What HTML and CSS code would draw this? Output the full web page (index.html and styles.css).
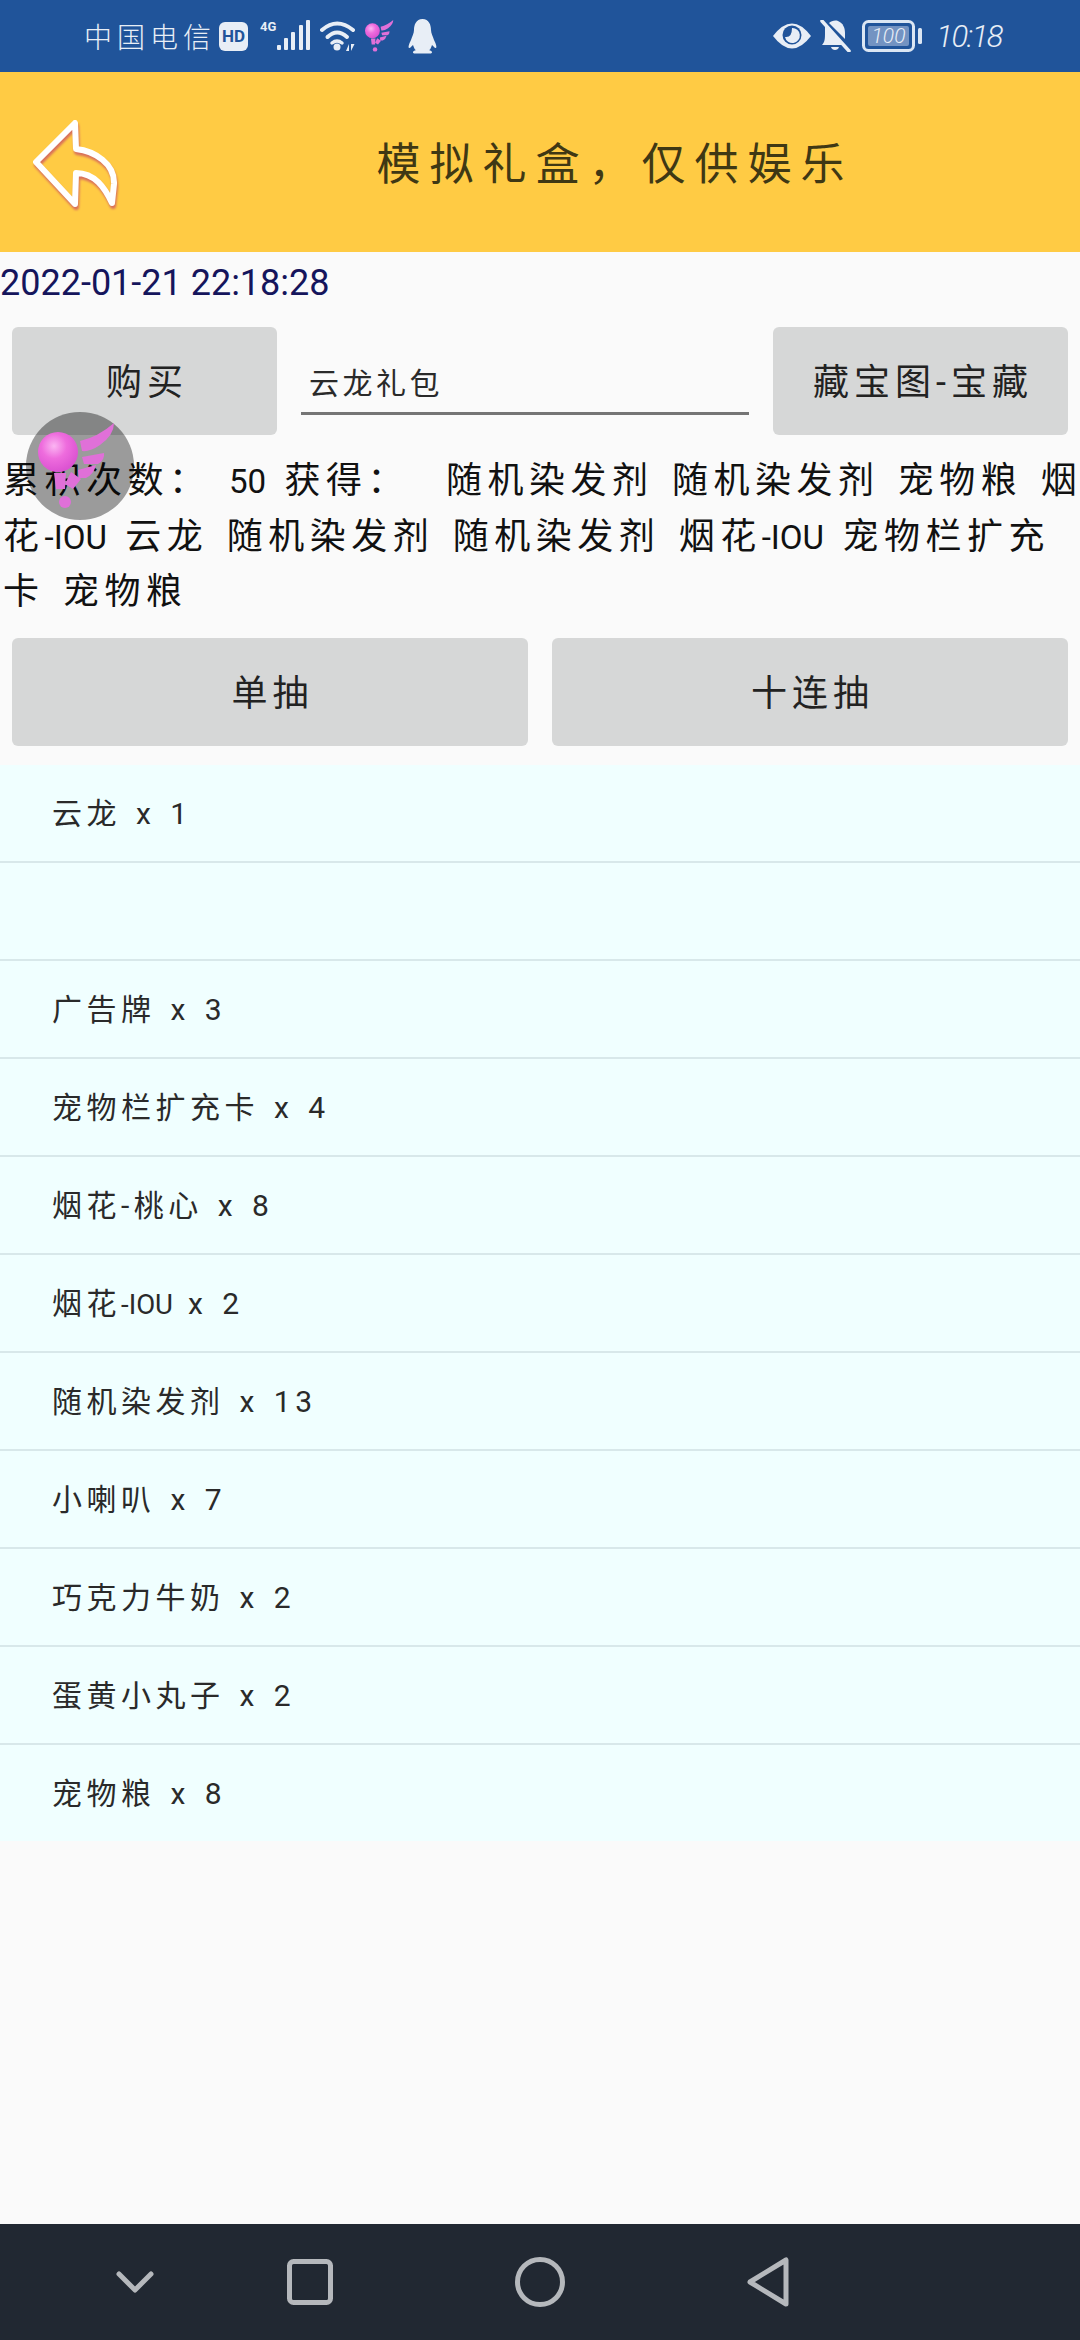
FILE: index.html
```html
<!DOCTYPE html>
<html lang="zh-CN">
<head>
    <meta charset="UTF-8">
    <meta name="viewport" content="width=device-width, initial-scale=1.0">
    <title>模拟礼盒，仅供娱乐</title>
    <link rel="stylesheet" href="styles.css">
</head>
<body>
    <svg class="defs" width="0" height="0">
        <defs>
            <radialGradient id="ballFill" cx="0.4" cy="0.35" r="0.7">
                <stop offset="0" stop-color="#fbb5f2"/>
                <stop offset="0.45" stop-color="#ee6cdd"/>
                <stop offset="1" stop-color="#d94fd0"/>
            </radialGradient>
            <symbol id="wingBall" viewBox="0 0 78 90">
                <circle cx="20" cy="31" r="20" fill="url(#ballFill)"/>
                <path d="M42 20 Q60 16 76 2 Q76 14 62 24 Q52 31 44 30 Z" fill="#e070d8"/>
                <path d="M44 36 L66 32 Q67 39 60 43 L46 43 Z" fill="#e070d8"/>
                <path d="M40 49 L58 44 Q56 53 48 57 L41 57 Z" fill="#e070d8"/>
                <path d="M33 51 L43 58 L35 68 L27 63 Z" fill="#e070d8"/>
                <path d="M16 52 L28 52 L27 68 L18 68 Z" fill="#e070d8"/>
                <circle cx="27" cy="81" r="6" fill="#e070d8"/>
            </symbol>
        </defs>
    </svg>

    <div class="status-bar">
        <div class="status-left">
            <span class="carrier">中国电信</span>
            <span class="hd-badge">HD</span>
            <svg class="icon-signal" width="50" height="32" viewBox="0 0 50 32">
                <text class="signal-label" x="0" y="11">4G</text>
                <rect x="17" y="25" width="4" height="5" rx="1"/>
                <rect x="24" y="18" width="4" height="12" rx="1"/>
                <rect x="31" y="12" width="4" height="18" rx="1"/>
                <rect x="39" y="5" width="4" height="25" rx="1"/>
                <rect x="46" y="0" width="4" height="30" rx="1"/>
            </svg>
            <svg class="icon-wifi" width="36" height="32" viewBox="0 0 36 32">
                <path d="M2 10 Q17 -3 33 10" fill="none" stroke="#e8eef6" stroke-width="4" stroke-linecap="round"/>
                <path d="M7.5 17 Q17 8 27 17" fill="none" stroke="#e8eef6" stroke-width="4" stroke-linecap="round"/>
                <path d="M12 23 Q17 19 22 23" fill="none" stroke="#e8eef6" stroke-width="3.5" stroke-linecap="round"/>
                <circle cx="17" cy="27" r="3.5" fill="#e8eef6"/>
                <path d="M26 31 L29 24 L29 31 Z M31 24 L34.5 24 L31 31 Z" fill="#e8eef6"/>
            </svg>
            <svg class="icon-pink" width="29" height="34"><use href="#wingBall"/></svg>
            <svg class="icon-qq" width="29" height="35" viewBox="0 0 29 35">
                <path d="M14.5 0 C8 0 6 6 6 11 C6 14 4 18 3 21 C1 25 0 28 1 29 C2 29.5 4 27 5 26 C6 29 7 31 8 31 C5 32 4 33.5 6 34.5 H23 C25 33.5 24 32 21 31 C22 31 23 29 24 26 C25 27 27 29.5 28 29 C29 28 28 25 26 21 C25 18 23 14 23 11 C23 6 21 0 14.5 0 Z" fill="#e8eef6"/>
            </svg>
        </div>
        <div class="status-right">
            <svg class="icon-eye" width="40" height="26" viewBox="0 0 40 26">
                <path d="M1 13 Q20 -12 39 13 Q20 38 1 13 Z" fill="#e8eef6"/>
                <circle cx="20" cy="12" r="9.5" fill="#20549a"/>
                <path d="M20 5 A7.5 7.5 0 1 1 13 14 Q20 15 20 5 Z" fill="#e8eef6"/>
            </svg>
            <svg class="icon-bell" width="31" height="32" viewBox="0 0 31 32">
                <path d="M5 5 L23 25 H2 C5 22 5 18 5 13 Z" fill="#e8eef6"/>
                <path d="M9 3 C11 1 15 0 18 1 C23 3 25 8 25 13 L25 19 Z" fill="#e8eef6"/>
                <path d="M11 27 H19 C18 31 12 31 11 27 Z" fill="#e8eef6"/>
                <path d="M2 1 L29 31" stroke="#e8eef6" stroke-width="3.5" stroke-linecap="round"/>
            </svg>
            <svg class="icon-battery" width="60" height="33" viewBox="0 0 60 33">
                <rect x="1.5" y="1.5" width="50" height="29" rx="5" fill="none" stroke="#dbe6f3" stroke-width="3"/>
                <rect x="6" y="6" width="41" height="20" rx="2" fill="#7393c2"/>
                <rect x="56" y="8" width="4" height="16" rx="1.5" fill="#dbe6f3"/>
                <text class="battery-label" x="26.5" y="23" text-anchor="middle">100</text>
            </svg>
            <span class="clock">10:18</span>
        </div>
    </div>

    <header class="title-bar">
        <div class="back-zone">
            <svg class="icon-back" width="90" height="92" viewBox="0 0 90 92">
                <path d="M3 44 L42 5 L43 31 C62 33 82 46 81 66 L79 85 C72 70 62 55 43 55 L42 86 Z" fill="none" stroke="#fff" stroke-width="6" stroke-linejoin="round"/>
            </svg>
        </div>
        <h1 class="page-title">模拟礼盒，仅供娱乐</h1>
    </header>

    <main class="content">
        <div class="date-line">2022-01-21 22:18:28</div>

        <div class="buy-row">
            <button class="btn btn-buy">购买</button>
            <div class="gift-field">云龙礼包</div>
            <button class="btn btn-map">藏宝图-宝藏</button>
        </div>

        <p class="draw-log">累积次数： <span class="tag">50</span> 获得：  随机染发剂 随机染发剂 宠物粮 烟<br>花<span class="tag">-IOU</span> 云龙 随机染发剂 随机染发剂 烟花<span class="tag">-IOU</span> 宠物栏扩充<br>卡 宠物粮</p>

        <div class="draw-row">
            <button class="btn">单抽</button>
            <button class="btn">十连抽</button>
        </div>

        <ul class="prize-list">
            <li>云龙 x 1</li>
            <li></li>
            <li>广告牌 x 3</li>
            <li>宠物栏扩充卡 x 4</li>
            <li>烟花-桃心 x 8</li>
            <li>烟花<span class="tag">-IOU</span> x 2</li>
            <li>随机染发剂 x 13</li>
            <li>小喇叭 x 7</li>
            <li>巧克力牛奶 x 2</li>
            <li>蛋黄小丸子 x 2</li>
            <li>宠物粮 x 8</li>
        </ul>
    </main>

    <nav class="nav-bar">
        <svg class="nav-back" width="38" height="22" viewBox="0 0 38 22"><path d="M3 3 L19 19 L35 3" fill="none" stroke="#b5b8bc" stroke-width="5" stroke-linecap="round" stroke-linejoin="round"/></svg>
        <svg class="nav-recent" width="46" height="46" viewBox="0 0 46 46"><rect x="2.5" y="2.5" width="41" height="41" rx="4" fill="none" stroke="#b5b8bc" stroke-width="5"/></svg>
        <svg class="nav-home" width="50" height="50" viewBox="0 0 50 50"><circle cx="25" cy="25" r="22.5" fill="none" stroke="#b5b8bc" stroke-width="5"/></svg>
        <svg class="nav-return" width="44" height="50" viewBox="0 0 44 50"><path d="M4 25 L40 3 V47 Z" fill="none" stroke="#b5b8bc" stroke-width="5" stroke-linejoin="round"/></svg>
    </nav>

    <div class="float-ball">
        <svg width="78" height="90"><use href="#wingBall"/></svg>
    </div>
</body>
</html>
```

FILE: styles.css
```css
html, body {
    margin: 0;
    padding: 0;
}
body {
    position: relative;
    display: flex;
    flex-direction: column;
    width: 1080px;
    height: 2340px;
    overflow: hidden;
    background-color: #fafafa;
    color: #1c1c1c;
    font-family: Roboto, "Noto Sans CJK SC", sans-serif;
}
.defs {
    position: absolute;
}

/* status bar */
.status-bar {
    display: flex;
    justify-content: space-between;
    align-items: center;
    height: 72px;
    padding: 0 78px 0 84px;
    background-color: #20549a;
    color: #e8eef6;
}
.status-left, .status-right {
    display: flex;
    align-items: center;
}
.carrier {
    width: 126px;
    font-size: 28px;
    letter-spacing: 5px;
    font-family: "Noto Sans CJK SC", sans-serif;
    font-weight: 300;
    white-space: nowrap;
}
.hd-badge {
    display: flex;
    justify-content: center;
    align-items: center;
    width: 29px;
    height: 29px;
    margin-left: 9px;
    border-radius: 6px;
    background-color: #e8eef6;
    color: #20549a;
    font-size: 17px;
    font-weight: 700;
}
.icon-signal {
    margin-left: 12px;
    fill: #e8eef6;
}
.signal-label {
    font-size: 13px;
    font-weight: 700;
}
.icon-wifi {
    margin-left: 10px;
}
.icon-pink {
    margin-left: 9px;
}
.icon-qq {
    margin-left: 14px;
}
.icon-bell {
    margin-left: 8px;
}
.icon-battery {
    margin-left: 11px;
}
.battery-label {
    fill: #e8eef6;
    font-size: 21px;
    font-style: italic;
    font-weight: 300;
}
.clock {
    margin-left: 14px;
    font-size: 31px;
    font-style: italic;
    font-weight: 300;
    letter-spacing: -1.5px;
}

/* title */
.title-bar {
    display: flex;
    align-items: center;
    height: 180px;
    background-color: #ffcb44;
}
.back-zone {
    display: flex;
    width: 150px;
    padding: 3px 0 0 33px;
    box-sizing: border-box;
}
.icon-back {
    filter: drop-shadow(1px 3px 1px #d8705a);
}
.page-title {
    flex: 1;
    margin: 0;
    padding-bottom: 3px;
    text-align: center;
    color: #3f3814;
    font-size: 44px;
    font-weight: 400;
    letter-spacing: 9px;
}

/* content */
.content {
    flex: 1;
}
.date-line {
    height: 60px;
    padding-top: 1px;
    box-sizing: border-box;
    line-height: 60px;
    font-size: 36px;
    color: #15155c;
}
.btn {
    height: 108px;
    padding: 0 0 4px 5px;
    border: none;
    border-radius: 6px;
    background-color: #d6d7d7;
    color: #222;
    font-family: inherit;
    font-size: 36px;
    letter-spacing: 5px;
}
.buy-row {
    display: flex;
    align-items: flex-start;
    margin-top: 15px;
    padding: 0 12px;
}
.btn-buy {
    width: 265px;
}
.btn-map {
    width: 295px;
    margin-left: 24px;
}
.gift-field {
    width: 448px;
    height: 88px;
    margin-left: 24px;
    padding: 20px 0 0 8px;
    box-sizing: border-box;
    line-height: 74px;
    border-bottom: 3px solid #757575;
    font-size: 30px;
    letter-spacing: 3.5px;
    color: #2a2a2a;
}
.draw-log {
    margin: 19px 0 0;
    padding-left: 3px;
    font-size: 36px;
    line-height: 55.5px;
    letter-spacing: 5.5px;
    word-spacing: 4px;
    white-space: pre;
    color: #111;
}
.tag {
    font-size: 0.92em;
    letter-spacing: 0;
}
.draw-row {
    display: grid;
    grid-template-columns: 1fr 1fr;
    gap: 24px;
    margin-top: 17px;
    padding: 0 12px;
}
.prize-list {
    margin: 19px 0 0;
    padding: 0;
    list-style: none;
    background-color: #f0ffff;
}
.prize-list li {
    height: 98px;
    padding-left: 52px;
    box-sizing: border-box;
    line-height: 98px;
    border-bottom: 2px solid #d8e8ea;
    font-size: 30px;
    letter-spacing: 4.5px;
    word-spacing: 3px;
    color: #2a2a2a;
}
.prize-list li:last-child {
    height: 96px;
    border-bottom: none;
}

/* navigation */
.nav-bar {
    display: flex;
    align-items: center;
    height: 116px;
    padding-left: 116px;
    background-color: #212832;
}
.nav-recent {
    margin-left: 133px;
}
.nav-home {
    margin-left: 182px;
}
.nav-return {
    margin-left: 181px;
}

.float-ball {
    position: absolute;
    left: 26px;
    top: 412px;
    display: flex;
    justify-content: center;
    align-items: center;
    width: 108px;
    height: 108px;
    padding-right: 7px;
    box-sizing: border-box;
    border-radius: 50%;
    background-color: rgba(0, 0, 0, 0.38);
}
```
